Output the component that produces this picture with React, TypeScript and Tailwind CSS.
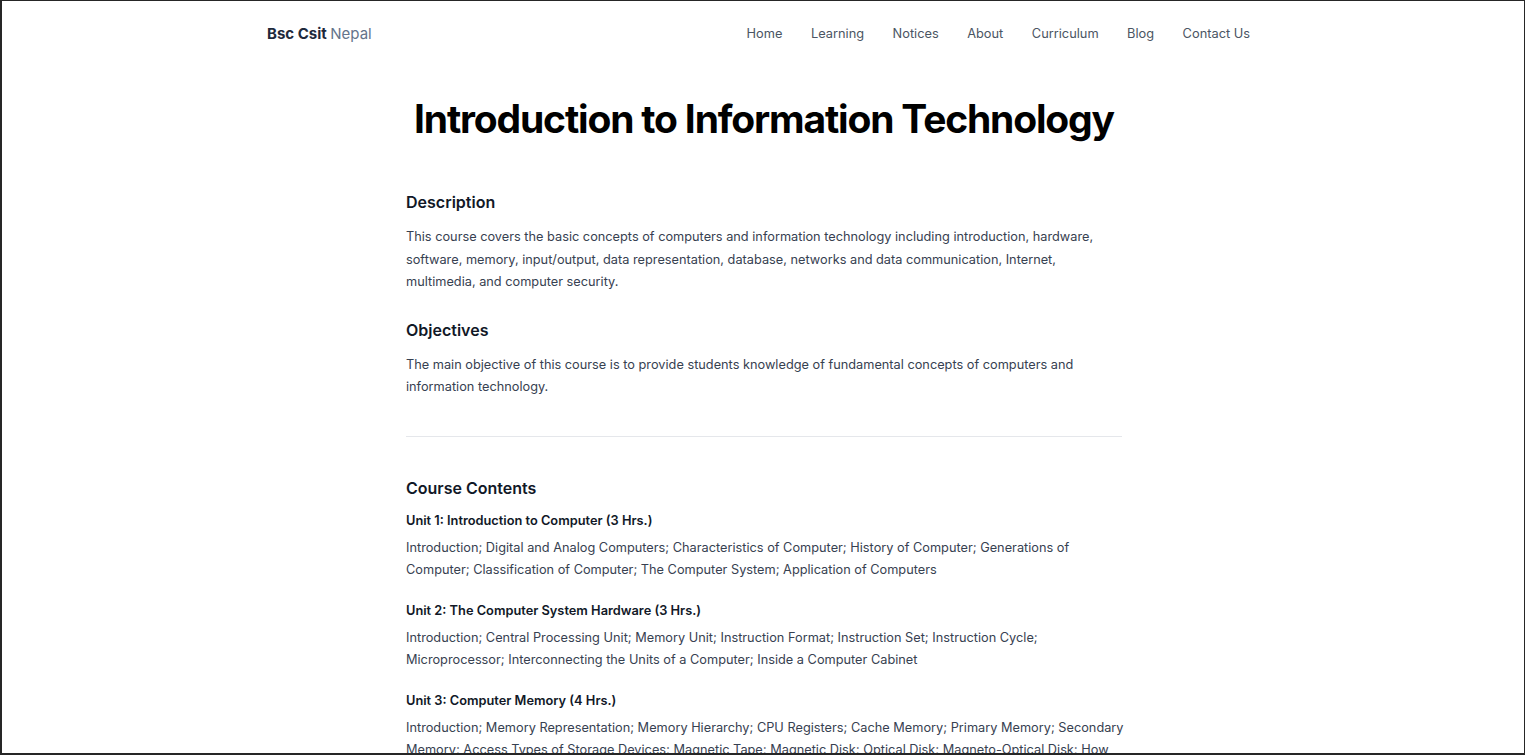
import React from 'react';

const navLinks = ['Home', 'Learning', 'Notices', 'About', 'Curriculum', 'Blog', 'Contact Us'];

const units = [
  {
    title: 'Unit 1: Introduction to Computer (3 Hrs.)',
    body: 'Introduction; Digital and Analog Computers; Characteristics of Computer; History of Computer; Generations of Computer; Classification of Computer; The Computer System; Application of Computers',
  },
  {
    title: 'Unit 2: The Computer System Hardware (3 Hrs.)',
    body: 'Introduction; Central Processing Unit; Memory Unit; Instruction Format; Instruction Set; Instruction Cycle; Microprocessor; Interconnecting the Units of a Computer; Inside a Computer Cabinet',
  },
  {
    title: 'Unit 3: Computer Memory (4 Hrs.)',
    body: 'Introduction; Memory Representation; Memory Hierarchy; CPU Registers; Cache Memory; Primary Memory; Secondary Memory; Access Types of Storage Devices; Magnetic Tape; Magnetic Disk; Optical Disk; Magneto-Optical Disk; How the Computer Uses its Memory',
  },
];

export default function App() {
  return (
    <div
      className="h-[755px] overflow-hidden bg-white border-solid border-[#262626] border-t border-l-2 border-r border-b-2"
      style={{ fontFamily: 'Inter, "Noto Sans", sans-serif' }}
    >
      <header className="h-[66px] w-[1024px] mx-auto px-4 flex items-center justify-between">
        <a className="text-[15px] text-[#1e293b] font-bold">
          Bsc Csit <span className="font-normal text-[#64748b]">Nepal</span>
        </a>
        <nav className="flex items-center gap-[28.5px] pr-[9px]">
          {navLinks.map((l) => (
            <a key={l} className="text-[12.8px] text-[#4b5563]">
              {l}
            </a>
          ))}
        </nav>
      </header>

      <main className="w-[724px] mx-auto pl-[5px]">
        <h1 className="mt-[28px] pr-[3px] whitespace-nowrap text-center text-[39px] leading-[48px] font-bold tracking-[-0.03em] text-black">
          Introduction to Information Technology
        </h1>

        <h2 className="mt-[47px] text-[16px] leading-[24px] font-semibold text-[#111827]">Description</h2>
        <p className="mt-[12px] text-[12.75px] leading-[22.5px] text-[#374151]">
          This course covers the basic concepts of computers and information technology including introduction, hardware,
          software, memory, input/output, data representation, database, networks and data communication, Internet,
          multimedia, and computer security.
        </p>

        <h2 className="mt-[24px] text-[16px] leading-[24px] font-semibold text-[#111827]">Objectives</h2>
        <p className="mt-[12px] text-[12.75px] leading-[22.5px] text-[#374151]">
          The main objective of this course is to provide students knowledge of fundamental concepts of computers and
          information technology.
        </p>

        <hr className="mt-[37px] mr-[3px] border-t border-[#e5e7eb]" />

        <h2 className="mt-[39px] text-[16px] leading-[24px] font-semibold text-[#111827]">Course Contents</h2>
        <div className="mt-[11px] flex flex-col gap-[19px]">
          {units.map((u) => (
            <div key={u.title}>
              <h3 className="text-[12.8px] leading-[20px] font-semibold text-[#111827]">{u.title}</h3>
              <p className="mt-[6px] text-[12.75px] leading-[22.5px] text-[#374151]">{u.body}</p>
            </div>
          ))}
        </div>
      </main>
    </div>
  );
}
